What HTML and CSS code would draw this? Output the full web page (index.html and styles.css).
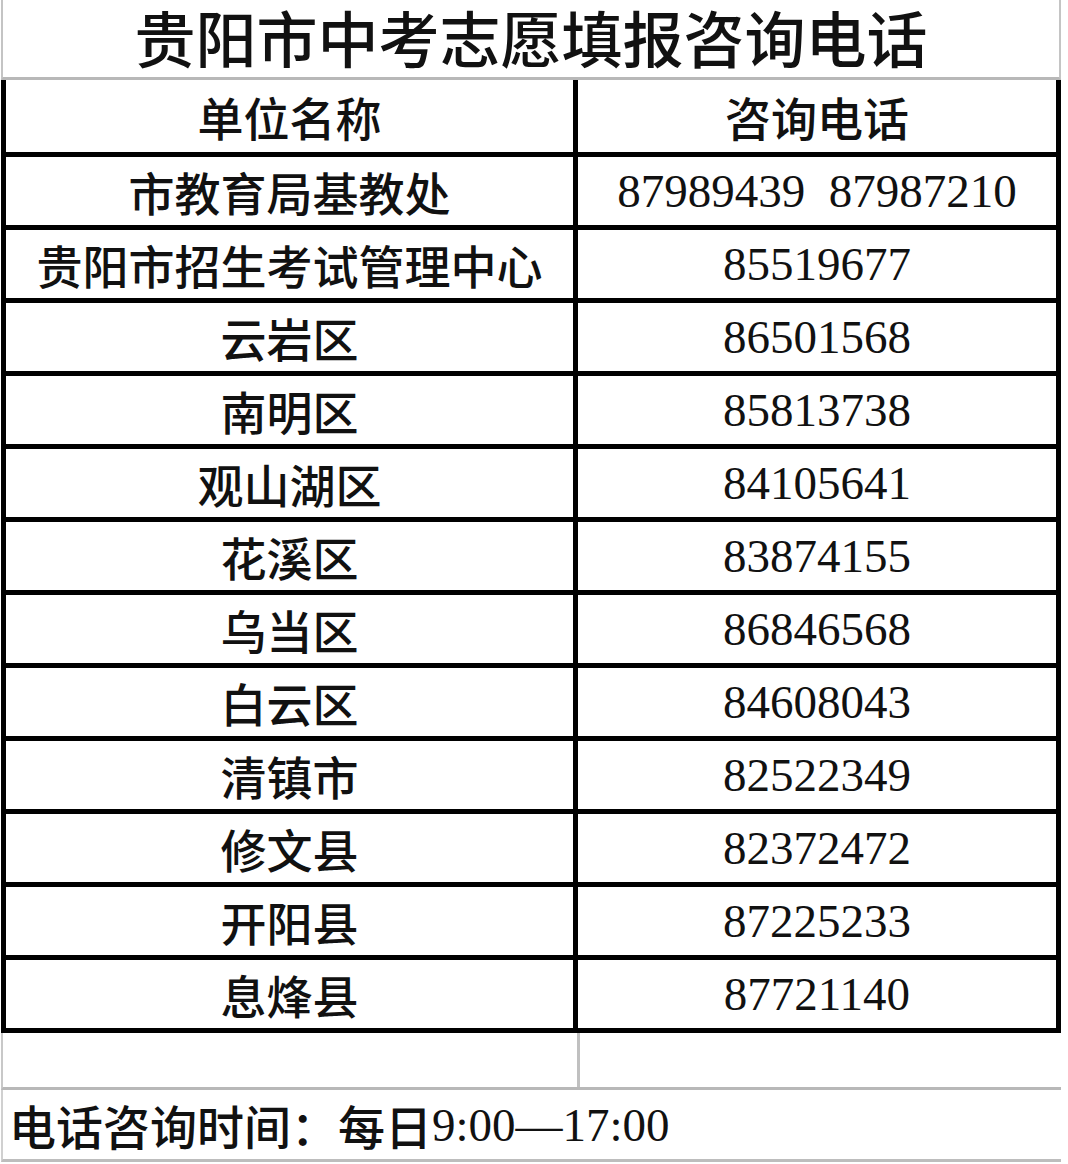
FILE: index.html
```html
<!DOCTYPE html>
<html lang="zh-CN">
<head>
<meta charset="utf-8">
<title>贵阳市中考志愿填报咨询电话</title>
<link rel="stylesheet" href="styles.css">
</head>
<body>
<div class="sheet">
  <div class="title">贵阳市中考志愿填报咨询电话</div>
  <div class="table">
    <div class="cell name head">单位名称</div>
    <div class="cell tel head cjk">咨询电话</div>

    <div class="cell name">市教育局基教处</div>
    <div class="cell tel">87989439&nbsp;&nbsp;87987210</div>

    <div class="cell name">贵阳市招生考试管理中心</div>
    <div class="cell tel">85519677</div>

    <div class="cell name">云岩区</div>
    <div class="cell tel">86501568</div>

    <div class="cell name">南明区</div>
    <div class="cell tel">85813738</div>

    <div class="cell name">观山湖区</div>
    <div class="cell tel">84105641</div>

    <div class="cell name">花溪区</div>
    <div class="cell tel">83874155</div>

    <div class="cell name">乌当区</div>
    <div class="cell tel">86846568</div>

    <div class="cell name">白云区</div>
    <div class="cell tel">84608043</div>

    <div class="cell name">清镇市</div>
    <div class="cell tel">82522349</div>

    <div class="cell name">修文县</div>
    <div class="cell tel">82372472</div>

    <div class="cell name">开阳县</div>
    <div class="cell tel">87225233</div>

    <div class="cell name">息烽县</div>
    <div class="cell tel">87721140</div>
  </div>
  <div class="blank">
    <div class="blank-cell blank-left"></div>
    <div class="blank-cell"></div>
  </div>
  <div class="footer"><span class="cjk">电话咨询时间：每日</span><span class="num">9:00—17:00</span></div>
</div>
</body>
</html>
```

FILE: styles.css
```css
html, body {
  margin: 0;
  padding: 0;
  background: #ffffff;
}

body {
  color: #111111;
  font-family: "Noto Sans CJK SC", "Noto Sans", sans-serif;
}

.sheet {
  width: 1060px;
  margin-left: 1px;
}

.title {
  height: 80px;
  border-left: 2px solid #c4c4c4;
  border-right: 2px solid #c4c4c4;
  border-bottom: 3px solid #b8b8b8;
  box-sizing: border-box;
  display: flex;
  align-items: center;
  justify-content: center;
  font-size: 61px;
  font-weight: 500;
  line-height: 1;
  padding-bottom: 5px;
}

.table {
  display: grid;
  grid-template-columns: 572px 1fr;
  border-left: 5px solid #000;
  border-right: 5px solid #000;
}

.cell {
  height: 68px;
  border-bottom: 5px solid #000;
  box-sizing: content-box;
  display: flex;
  align-items: center;
  justify-content: center;
  font-size: 46px;
  line-height: 56px;
  white-space: nowrap;
}

.cell.head {
  height: 72px;
}

.cell.name {
  border-right: 5px solid #000;
  font-family: "Noto Sans CJK SC", sans-serif;
  font-weight: 500;
}

.cell.tel {
  font-family: "Liberation Serif", "Times New Roman", serif;
  font-size: 47px;
}

.cell.tel.cjk {
  font-family: "Noto Sans CJK SC", sans-serif;
  font-size: 46px;
  font-weight: 500;
}

.blank {
  display: grid;
  grid-template-columns: 577px 1fr;
  border-left: 2px solid #c8c8c8;
  border-bottom: 3px solid #b8b8b8;
}

.blank-cell {
  height: 54px;
}

.blank-left {
  border-right: 3px solid #c0c0c0;
}

.footer {
  height: 69px;
  border-left: 2px solid #d0d0d0;
  border-bottom: 3px solid #bdbdbd;
  display: flex;
  align-items: center;
  padding-left: 6px;
  font-size: 47px;
  line-height: 56px;
  white-space: nowrap;
}

.footer .cjk {
  font-family: "Noto Sans CJK SC", sans-serif;
  font-weight: 500;
}

.footer .num {
  font-family: "Liberation Serif", "Times New Roman", serif;
}
```
